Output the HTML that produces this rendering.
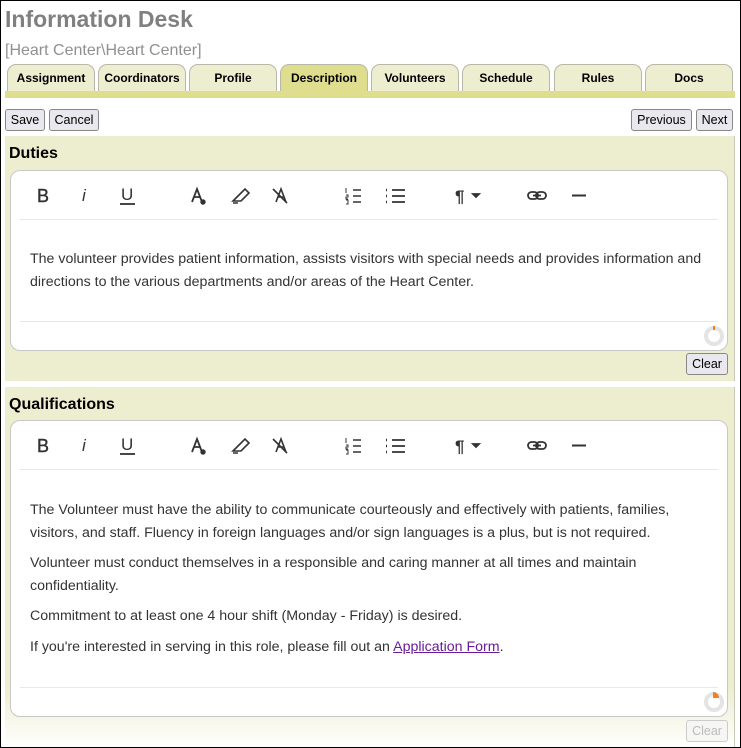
<!DOCTYPE html>
<html><head><style>
*{box-sizing:border-box;margin:0;padding:0}
body{width:741px;height:748px;overflow:hidden;background:#fff;font-family:"Liberation Sans",Arial,sans-serif;position:relative}
.frame{position:absolute;left:0;top:0;width:741px;height:748px;border:1px solid #000;pointer-events:none;z-index:10}
.abs{position:absolute}
h1{position:absolute;left:5px;top:6px;font-size:23px;font-weight:bold;color:#808080}
.sub{position:absolute;left:5px;top:42px;font-size:16px;color:#909090}
.tab{position:absolute;top:64px;width:88px;height:28px;background:#ededd0;border:1px solid #b8b8a8;border-bottom:none;border-radius:9px 9px 0 0;font-size:12px;font-weight:bold;text-align:center;line-height:26px;color:#000}
.tab.on{background:#dede8e}
.strip{position:absolute;left:5px;top:91px;width:730px;height:7px;background:#dede8e}
.btn{position:absolute;height:22px;border:1px solid #888;border-radius:3px;background:#e8e8ee;font-size:12.5px;line-height:20px;text-align:center;color:#000}
.sec{position:absolute;left:5px;width:730px;background:#ededd0;border-right:1px solid #c8c8b8}
.lbl{position:absolute;left:4px;font-size:16px;font-weight:bold;color:#000}
.ed{position:absolute;left:5px;width:718px;background:#fff;border:1px solid #c8c8c8;border-radius:10px}
.hr{position:absolute;left:9px;right:9px;height:1px;background:#e8e8e8}
.txt{position:absolute;left:19px;right:20px;font-size:14.2px;color:#333;line-height:22.5px}
.txt p{margin-bottom:8px}
.spin{position:absolute;width:20px;height:20px;border-radius:50%;border:4px solid #e4e4e4}
a{color:#6a1b9a}
</style></head><body>
<div class="frame"></div>
<h1>Information Desk</h1>
<div class="sub">[Heart Center\Heart Center]</div>
<div class="tab" style="left:7px">Assignment</div>
<div class="tab" style="left:98px">Coordinators</div>
<div class="tab" style="left:189px">Profile</div>
<div class="tab on" style="left:280px">Description</div>
<div class="tab" style="left:371px">Volunteers</div>
<div class="tab" style="left:462px">Schedule</div>
<div class="tab" style="left:554px">Rules</div>
<div class="tab" style="left:645px">Docs</div>
<div class="strip"></div>
<div class="btn" style="left:5px;top:109px;width:40px">Save</div>
<div class="btn" style="left:49px;top:109px;width:50px">Cancel</div>
<div class="btn" style="left:631px;top:109px;width:61px">Previous</div>
<div class="btn" style="left:696px;top:109px;width:37px">Next</div>

<div class="sec" style="top:136px;height:245px">
 <div class="lbl" style="top:9px">Duties</div>
 <div class="ed" style="top:34px;height:181px">
  <div class="tbw"></div>
  <div class="hr" style="top:48px"></div>
  <div class="txt" style="top:77px">The volunteer provides patient information, assists visitors with special needs and provides information and directions to the various departments and/or areas of the Heart Center.</div>
  <div class="hr" style="top:150px"></div>
  <div class="spin" style="left:693px;top:155px"></div>
  <div class="abs" style="left:702px;top:155px;width:2px;height:4px;background:#f08020"></div>
 </div>
 <div class="btn" style="left:681px;top:217px;width:42px">Clear</div>
</div>

<div class="sec" style="top:387px;height:361px;background:linear-gradient(#ededd0 0,#ededd0 300px,#fff 361px)">
 <div class="lbl" style="top:9px">Qualifications</div>
 <div class="ed" style="top:33px;height:297px">
  <div class="tbw"></div>
  <div class="hr" style="top:48px"></div>
  <div class="txt" style="top:78px">
   <p>The Volunteer must have the ability to communicate courteously and effectively with patients, families, visitors, and staff. Fluency in foreign languages and/or sign languages is a plus, but is not required.</p>
   <p>Volunteer must conduct themselves in a responsible and caring manner at all times and maintain confidentiality.</p>
   <p>Commitment to at least one 4 hour shift (Monday - Friday) is desired.</p>
   <p>If you're interested in serving in this role, please fill out an <a href="#">Application Form</a>.</p>
  </div>
  <div class="hr" style="top:266px"></div>
  <div class="spin" style="left:693px;top:271px"></div>
  <div class="abs" style="left:702px;top:271px;width:6px;height:6px;background:#f08020;border-radius:0 6px 0 0"></div>
 </div>
 <div class="btn" style="left:681px;top:333px;width:42px;color:#bbb;border-color:#ccc;background:#f6f6f4">Clear</div>
</div>

<script>
var tb='<svg width="718" height="49" style="position:absolute;left:0;top:0" fill="none" stroke="#333" stroke-width="1.8">'+
'<text x="26" y="31" font-family="Liberation Sans" font-size="18" fill="#333" stroke="#333" stroke-width="0.4">B</text>'+
'<text x="71" y="30" font-family="Liberation Sans" font-style="italic" font-size="17" fill="#333" stroke="none">i</text>'+
'<text x="110" y="29" font-family="Liberation Sans" font-size="17" fill="#333" stroke="none">U</text><line x1="109" y1="33" x2="124" y2="33"/>'+
'<path d="M181 31 L186 18 L191 31 M183 26 H189"/><circle cx="192" cy="31" r="2.7" fill="#333" stroke="none"/>'+
'<path d="M222 30 L226 26 L234 18 L238 22 L230 30 Z M222 32 H227" stroke-width="1.6"/>'+
'<path d="M265 31 L270 18 L275 31 M267 26 H273 M262 18 L276 32" stroke-width="1.6"/>'+
'<path d="M342 19 H350 M342 25 H350 M342 31 H350" stroke-width="1.5"/><path d="M335 17 V22 M335 24 h2 v2 h-2 v2 h2 M335 29 h2 v4 h-2" stroke-width="1"/>'+
'<path d="M381 19 H394 M381 25 H394 M381 31 H394" stroke-width="1.8"/>'+
'<path d="M375 19 H376 M375 25 H376 M375 31 H376" stroke-width="2.5"/>'+
'<text x="444" y="31" font-family="Liberation Sans" font-weight="bold" font-size="17" fill="#333" stroke="none">¶</text><path d="M462 23 L465 26 L468 23 Z" fill="#333"/>'+
'<rect x="517" y="21" width="10" height="7" rx="3.5"/><rect x="525" y="21" width="10" height="7" rx="3.5"/><line x1="522" y1="24.5" x2="530" y2="24.5"/>'+
'<line x1="561" y1="24.5" x2="575" y2="24.5" stroke-width="2"/></svg>';
document.querySelectorAll('.tbw').forEach(function(e){e.outerHTML=tb});
</script>
</body></html>
